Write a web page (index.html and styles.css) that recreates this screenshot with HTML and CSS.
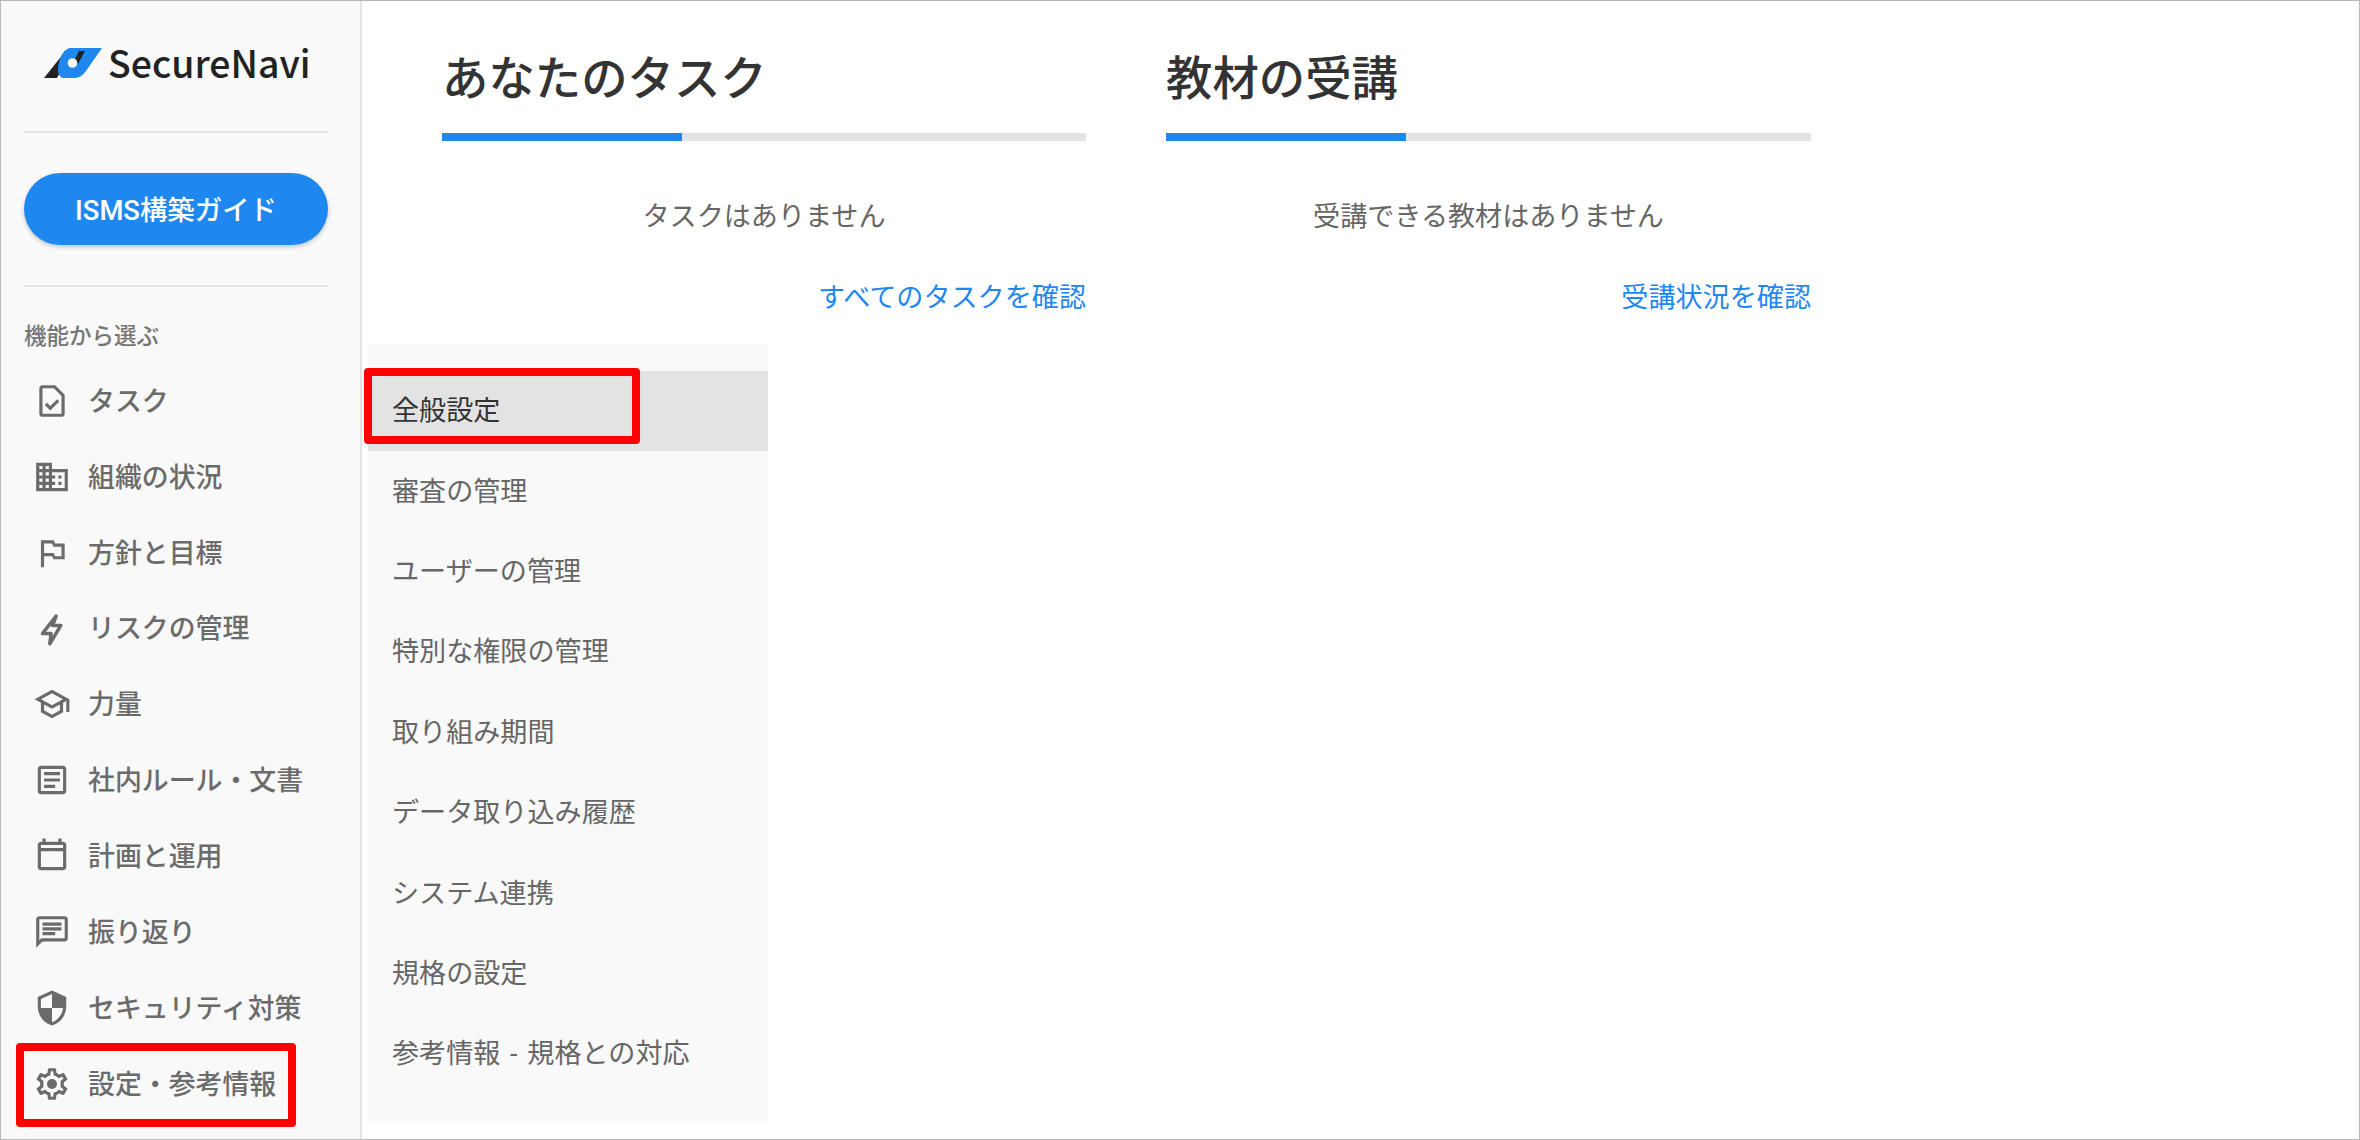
FILE: index.html
```html
<!DOCTYPE html>
<html lang="ja">
<head>
<meta charset="utf-8">
<title>SecureNavi</title>
<link rel="stylesheet" href="styles.css">
</head>
<body>
<div class="frame">
  <aside class="sidebar">
    <div class="logo">
      <svg class="logo-mark" viewBox="0 0 58 30" aria-hidden="true">
        <path class="logo-dark" d="M0 30 L18 7.5 L22 14 L13 30 Z"/>
        <path class="logo-blue" d="M25 0 H58 L42 23 Q37 30 31 30 H19 Q13 28 14 19 Q16 4 25 0 Z"/>
        <path class="logo-dark" d="M31 11 L35 3 L41 3 L34 16 Z"/>
        <circle class="logo-hole" cx="28.5" cy="15" r="4.8"/>
      </svg>
      <span class="logo-text">SecureNavi</span>
    </div>
    <hr class="rule">
    <div class="guide-wrap"><button class="guide">ISMS構築ガイド</button></div>
    <hr class="rule">
    <div class="nav-label">機能から選ぶ</div>
    <nav class="nav">
      <a class="nav-item">
        <svg class="ico" viewBox="0 0 24 24"><path d="M14 2H6c-1.1 0-2 .9-2 2v16c0 1.1.9 2 2 2h12c1.1 0 2-.9 2-2V8l-6-6zm4 18H6V4h7.17L18 8.83V20z"/><path d="M8.82 13.05 7.4 14.46 10.94 18l5.66-5.66-1.41-1.41-4.24 4.24-1.13-1.12z"/></svg>
        <span class="nav-text">タスク</span>
      </a>
      <a class="nav-item">
        <svg class="ico" viewBox="0 0 24 24"><path d="M12 7V3H2v18h20V7H12zM6 19H4v-2h2v2zm0-4H4v-2h2v2zm0-4H4V9h2v2zm0-4H4V5h2v2zm4 12H8v-2h2v2zm0-4H8v-2h2v2zm0-4H8V9h2v2zm0-4H8V5h2v2zm10 12h-8v-2h2v-2h-2v-2h2v-2h-2V9h8v10zm-2-8h-2v2h2v-2zm0 4h-2v2h2v-2z"/></svg>
        <span class="nav-text">組織の状況</span>
      </a>
      <a class="nav-item">
        <svg class="ico" viewBox="0 0 24 24"><path d="M14 6l-1-2H5v17h2v-7h5l1 2h7V6h-6zm4 8h-4l-1-2H7V6h5l1 2h5v6z"/></svg>
        <span class="nav-text">方針と目標</span>
      </a>
      <a class="nav-item">
        <svg class="ico ico-line" viewBox="0 0 24 24"><path d="M14.6 4.5 6 15.5h5.4l-.8 6.5 7-11.6h-5.2z"/></svg>
        <span class="nav-text">リスクの管理</span>
      </a>
      <a class="nav-item">
        <svg class="ico" viewBox="0 0 24 24"><path d="M12 3L1 9l4 2.18v6L12 21l7-3.82v-6l2-1.09V17h2V9L12 3zm6.82 6L12 12.72 5.18 9 12 5.28 18.82 9zM17 15.99l-5 2.73-5-2.73v-3.72L12 15l5-2.73v3.72z"/></svg>
        <span class="nav-text">力量</span>
      </a>
      <a class="nav-item">
        <svg class="ico" viewBox="0 0 24 24"><path d="M19 5v14H5V5h14m0-2H5c-1.1 0-2 .9-2 2v14c0 1.1.9 2 2 2h14c1.1 0 2-.9 2-2V5c0-1.1-.9-2-2-2z"/><path d="M14 17H7v-2h7v2zm3-4H7v-2h10v2zm0-4H7V7h10v2z"/></svg>
        <span class="nav-text">社内ルール・文書</span>
      </a>
      <a class="nav-item">
        <svg class="ico" viewBox="0 0 24 24"><path d="M19 3h-1V1h-2v2H8V1H6v2H5c-1.1 0-2 .9-2 2v14c0 1.1.9 2 2 2h14c1.1 0 2-.9 2-2V5c0-1.1-.9-2-2-2zm0 16H5V9h14v10zM5 7V5h14v2H5z"/></svg>
        <span class="nav-text">計画と運用</span>
      </a>
      <a class="nav-item">
        <svg class="ico" viewBox="0 0 24 24"><path d="M20 2H4c-1.1 0-2 .9-2 2v18l4-4h14c1.1 0 2-.9 2-2V4c0-1.1-.9-2-2-2zm0 14H5.17L4 17.17V4h16v12z"/><path d="M6 12h8v2H6zM6 9h12v2H6zM6 6h12v2H6z"/></svg>
        <span class="nav-text">振り返り</span>
      </a>
      <a class="nav-item">
        <svg class="ico" viewBox="0 0 24 24"><path d="M12 1L3 5v6c0 5.55 3.84 10.74 9 12 5.16-1.26 9-6.45 9-12V5l-9-4zm0 10.99h7c-.53 4.12-3.28 7.79-7 8.94V12H5V6.3l7-3.11v8.8z"/></svg>
        <span class="nav-text">セキュリティ対策</span>
      </a>
      <a class="nav-item">
        <svg class="ico" viewBox="0 0 24 24"><path d="M19.43 12.98c.04-.32.07-.64.07-.98 0-.34-.03-.66-.07-.98l2.11-1.65c.19-.15.24-.42.12-.64l-2-3.46c-.09-.16-.26-.25-.44-.25-.06 0-.12.01-.17.03l-2.49 1c-.52-.4-1.08-.73-1.69-.98l-.38-2.65C14.46 2.18 14.25 2 14 2h-4c-.25 0-.46.18-.49.42l-.38 2.65c-.61.25-1.17.59-1.69.98l-2.49-1c-.06-.02-.12-.03-.18-.03-.17 0-.34.09-.43.25l-2 3.46c-.13.22-.07.49.12.64l2.11 1.65c-.04.32-.07.65-.07.98 0 .33.03.66.07.98l-2.11 1.65c-.19.15-.24.42-.12.64l2 3.46c.09.16.26.25.44.25.06 0 .12-.01.17-.03l2.49-1c.52.4 1.08.73 1.69.98l.38 2.65c.03.24.24.42.49.42h4c.25 0 .46-.18.49-.42l.38-2.65c.61-.25 1.17-.59 1.69-.98l2.49 1c.06.02.12.03.18.03.17 0 .34-.09.43-.25l2-3.46c.12-.22.07-.49-.12-.64l-2.11-1.65zm-1.98-1.71c.04.31.05.52.05.73 0 .21-.02.43-.05.73l-.14 1.13.89.7 1.08.84-.7 1.21-1.27-.51-1.04-.42-.9.68c-.43.32-.84.56-1.25.73l-1.06.43-.16 1.13-.2 1.35h-1.4l-.19-1.35-.16-1.13-1.06-.43c-.43-.18-.83-.41-1.23-.71l-.91-.7-1.06.43-1.27.51-.7-1.21 1.08-.84.89-.7-.14-1.13c-.03-.31-.05-.54-.05-.74s.02-.43.05-.73l.14-1.13-.89-.7-1.08-.84.7-1.21 1.27.51 1.04.42.9-.68c.43-.32.84-.56 1.25-.73l1.06-.43.16-1.13.2-1.35h1.39l.19 1.35.16 1.13 1.06.43c.43.18.83.41 1.23.71l.91.7 1.06-.43 1.27-.51.7 1.21-1.07.85-.89.7.14 1.13z"/><circle cx="12" cy="12" r="3.2"/></svg>
        <span class="nav-text">設定・参考情報</span>
        <i class="mark mark-nav"></i>
      </a>
    </nav>
  </aside>

  <main class="main">
    <section class="card">
      <h2 class="card-title">あなたのタスク</h2>
      <div class="track"><div class="track-fill"></div></div>
      <p class="empty">タスクはありません</p>
      <a class="more">すべてのタスクを確認</a>
    </section>
    <section class="card">
      <h2 class="card-title">教材の受講</h2>
      <div class="track"><div class="track-fill"></div></div>
      <p class="empty">受講できる教材はありません</p>
      <a class="more">受講状況を確認</a>
    </section>
  </main>

  <div class="flyout">
    <a class="fly-item is-active"><span class="fly-text">全般設定</span><i class="mark mark-fly"></i></a>
    <a class="fly-item"><span class="fly-text">審査の管理</span></a>
    <a class="fly-item"><span class="fly-text">ユーザーの管理</span></a>
    <a class="fly-item"><span class="fly-text">特別な権限の管理</span></a>
    <a class="fly-item"><span class="fly-text">取り組み期間</span></a>
    <a class="fly-item"><span class="fly-text">データ取り込み履歴</span></a>
    <a class="fly-item"><span class="fly-text">システム連携</span></a>
    <a class="fly-item"><span class="fly-text">規格の設定</span></a>
    <a class="fly-item"><span class="fly-text">参考情報 - 規格との対応</span></a>
  </div>
</div>
</body>
</html>
```
FILE: styles.css
```css
* { box-sizing: border-box; }
html, body { margin: 0; height: 100%; background: #fff; }
body {
  font-family: Roboto, "Noto Sans CJK JP", sans-serif;
  font-size: 27.1px;
  color: #666;
}
.frame {
  position: relative;
  display: flex;
  width: 2360px;
  height: 1140px;
  border: 1px solid #b8b8b8;
  overflow: hidden;
}

/* sidebar */
.sidebar {
  flex: none;
  width: 361px;
  background: #f9f9f9;
  border-right: 2px solid #e3e3e3;
}
.logo {
  display: flex;
  align-items: center;
  gap: 6px;
  height: 130px;
  padding: 0 0 6px 43px;
}
.logo-mark { width: 58px; height: 30px; flex: none; }
.logo-dark { fill: #222; }
.logo-blue { fill: #1f88f0; }
.logo-hole { fill: #f9f9f9; }
.logo-text {
  font-family: "Noto Sans CJK JP", sans-serif;
  font-weight: 500;
  font-size: 37.4px;
  line-height: 1;
  color: #222;
}
.rule {
  height: 2px;
  margin: 0 32px 0 23px;
  border: 0;
  background: #e3e3e3;
}
.guide-wrap { padding: 40px 32px 40px 23px; }
.guide {
  display: block;
  width: 100%;
  height: 72px;
  padding: 0 0 2px;
  border: 0;
  border-radius: 36px;
  background: #1f88f0;
  box-shadow: 0 2px 4px rgba(0, 0, 0, 0.22);
  color: #fff;
  font: 500 27.4px Roboto, "Noto Sans CJK JP", sans-serif;
}
.nav-label {
  margin: 35px 0 0 23px;
  height: 28px;
  font-size: 22.5px;
  font-weight: 500;
  line-height: 28px;
  color: #757575;
}
.nav { margin-top: 13px; }
.nav-item {
  position: relative;
  display: flex;
  align-items: center;
  gap: 17px;
  height: 75.85px;
  padding-left: 32px;
  font-size: 26.9px;
  font-weight: 500;
  color: #6b6b6b;
}
.nav-text { padding-bottom: 3px; }
.ico { flex: none; width: 38px; height: 38px; fill: #6b6b6b; }
.ico-line {
  fill: none;
  stroke: #6b6b6b;
  stroke-width: 2.2;
  stroke-linejoin: round;
}

/* red annotation boxes */
.mark {
  position: absolute;
  border: 8px solid #f00;
  border-radius: 4px;
  pointer-events: none;
}
.mark-nav { left: 15px; top: -2.6px; width: 280px; height: 84px; }
.mark-fly { left: -4px; top: -3px; width: 276px; height: 76px; }

/* main */
.main {
  flex: 1;
  display: flex;
  gap: 80px;
  padding-left: 80px;
}
.card { width: 644px; }
.card + .card { width: 645px; }
.card-title {
  margin: 0;
  padding-top: 47px;
  height: 132px;
  font-size: 46.4px;
  font-weight: 500;
  line-height: 62px;
  color: #333;
}
.track { height: 8px; background: #e3e3e3; }
.track-fill { width: 240px; height: 100%; background: #1f88f0; }
.empty {
  margin: 56px 0 0;
  height: 40px;
  line-height: 40px;
  text-align: center;
}
.more {
  display: block;
  margin-top: 41px;
  height: 40px;
  line-height: 40px;
  text-align: right;
  color: #1f88f0;
}

/* flyout menu */
.flyout {
  position: absolute;
  left: 367px;
  top: 344px;
  width: 400px;
  height: 776px;
  padding: 26px 0;
  background: #f9f9f9;
}
.fly-item {
  position: relative;
  display: flex;
  align-items: center;
  height: 80.4px;
  padding-left: 24px;
  color: #666;
}
.fly-text { padding-bottom: 5px; word-spacing: 3px; }
.is-active { background: #e3e3e3; color: #333; }
```
